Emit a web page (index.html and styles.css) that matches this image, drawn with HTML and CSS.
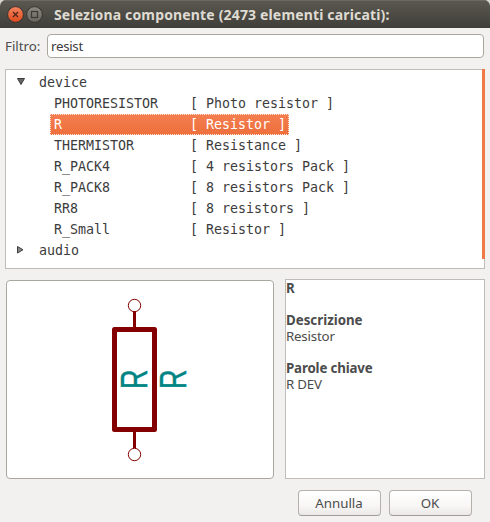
FILE: index.html
```html
<!DOCTYPE html>
<html lang="it">
<head>
<meta charset="utf-8">
<title>Seleziona componente</title>
<link rel="stylesheet" href="styles.css">
</head>
<body>
<div class="window">
  <header class="titlebar">
    <svg class="controls" width="36" height="18" viewBox="0 0 36 18">
      <defs>
        <linearGradient id="close" x1="0" y1="0" x2="0" y2="1"><stop offset="0" stop-color="#f58560"/><stop offset="1" stop-color="#dd4a1c"/></linearGradient>
        <linearGradient id="max" x1="0" y1="0" x2="0" y2="1"><stop offset="0" stop-color="#8b8980"/><stop offset="1" stop-color="#66645d"/></linearGradient>
      </defs>
      <circle cx="8.5" cy="9.5" r="7.9" fill="url(#close)" stroke="#34332e"/>
      <path d="M6 7l5 5m0-5l-5 5" stroke="#4d251a" stroke-width="1.3"/>
      <circle cx="27.5" cy="9.5" r="7.9" fill="url(#max)" stroke="#34332e"/>
      <rect x="24.5" y="6.5" width="6" height="6" fill="none" stroke="#3a3933" stroke-width="1.2"/>
    </svg>
    <h1>Seleziona componente (2473 elementi caricati):</h1>
  </header>
  <div class="filter">
    <label class="filter-label" for="filter">Filtro:</label>
    <input id="filter" class="filter-input" type="text" value="resist">
  </div>
  <div class="tree">
    <div class="group"><svg width="12" height="12"><path d="M2.5 2.5h7L6 8.5z" fill="#666" stroke="#3c3c3c"/></svg>device</div>
    <div class="item"><span class="name">PHOTORESISTOR</span><span>[ Photo resistor ]</span></div>
    <div class="item selected"><span class="name">R</span><span>[ Resistor ]</span></div>
    <div class="item"><span class="name">THERMISTOR</span><span>[ Resistance ]</span></div>
    <div class="item"><span class="name">R_PACK4</span><span>[ 4 resistors Pack ]</span></div>
    <div class="item"><span class="name">R_PACK8</span><span>[ 8 resistors Pack ]</span></div>
    <div class="item"><span class="name">RR8</span><span>[ 8 resistors ]</span></div>
    <div class="item"><span class="name">R_Small</span><span>[ Resistor ]</span></div>
    <div class="group"><svg width="12" height="12"><path d="M2.5 2.5v6.5L8 5.75z" fill="#888" stroke="#3c3c3c"/></svg>audio</div>
    <div class="scrollbar"></div>
  </div>
  <div class="panels">
    <div class="preview">
      <svg width="266" height="196" viewBox="7 281 266 196">
        <g fill="none" stroke="#840000">
          <path d="M134.5 311v18M134.5 430v18" stroke-width="3"/>
          <rect x="114.5" y="329.5" width="40" height="100" stroke-width="5" stroke-linejoin="round"/>
          <circle cx="134.5" cy="305.5" r="6.2"/>
          <circle cx="134.5" cy="454.5" r="6.2"/>
        </g>
        <g class="symbol-text">
          <text transform="translate(146.7 389) rotate(-90) scale(.72 1)">R</text>
          <text transform="translate(186.2 389) rotate(-90) scale(.72 1)">R</text>
        </g>
      </svg>
    </div>
    <div class="details">
      <b>R</b>
      <b class="heading">Descrizione</b>
      <span class="value">Resistor</span>
      <b class="heading keywords">Parole chiave</b>
      <span class="value">R DEV</span>
    </div>
  </div>
  <footer class="actions">
    <button>Annulla</button>
    <button>OK</button>
  </footer>
</div>
</body>
</html>
```
FILE: styles.css
```css
* { box-sizing: border-box; }
body {
  margin: 0;
  background: #d8d6d3;
  color: #4c4c4c;
  font: 13.3px/16px "Noto Sans", sans-serif;
}
.window {
  height: 522px;
  overflow: hidden;
  border-radius: 6px 6px 0 0;
  background: #f2f1f0;
}
.titlebar {
  display: flex;
  align-items: center;
  height: 28px;
  padding-left: 7px;
  background: linear-gradient(#5b5951, #3f3e39);
  box-shadow: inset 0 1px #6b6961;
}
.controls { flex: none; }
h1 {
  margin: 2px 0 0 11px;
  color: #dfdbd2;
  font-size: 14px;
  line-height: 20px;
  letter-spacing: .16px;
  white-space: nowrap;
}
.filter {
  display: flex;
  align-items: center;
  height: 41px;
  padding: 0 6px 5px 5px;
}
.filter-label { width: 42px; }
.filter-input {
  flex: 1;
  min-width: 0;
  height: 24px;
  padding: 0 3px;
  border: 1px solid #aaa79f;
  border-radius: 4px;
  background: #fff;
  color: #3c3c3c;
  font: inherit;
  letter-spacing: -.3px;
}
.tree {
  position: relative;
  height: 200px;
  margin: 0 5px;
  padding-top: 2px;
  border: 1px solid #c0bdb8;
  background: #fff;
  color: #3c3c3c;
  font: 13.3px/21px "DejaVu Sans Mono", monospace;
  letter-spacing: -.007px;
}
.group, .item { height: 21px; display: flex; white-space: pre; }
.group { padding-left: 9px; }
.group svg { margin: 4px 12px 0 0; }
.item { width: max-content; margin-left: 44px; padding: 0 3px 0 4px; }
.name { width: 136px; }
.selected {
  background: linear-gradient(#f47e50, #ed6f3c);
  outline: 1px dotted #fbe3d8;
  outline-offset: -1px;
  color: #fff;
}
.scrollbar {
  position: absolute;
  top: -1px;
  right: -1px;
  width: 3px;
  height: 190px;
  background: #f07746;
}
.panels {
  display: flex;
  gap: 11px;
  margin: 10px 5px 0 6px;
}
.preview {
  width: 268px;
  height: 199px;
  margin-top: 1px;
  border: 1px solid #aaa79f;
  border-radius: 4px;
  background: #fff;
}
.preview svg { display: block; }
.symbol-text {
  fill: #008484;
  stroke: #008484;
  stroke-width: .5px;
  font: 37.5px "Liberation Sans", sans-serif;
}
.details {
  display: flex;
  flex-direction: column;
  align-items: flex-start;
  width: 200px;
  height: 200px;
  border: 1px solid #c0bdb8;
  background: #fff;
}
.heading { margin-top: 16px; }
.keywords { letter-spacing: -.15px; }
.value { letter-spacing: -.2px; }
.actions {
  display: flex;
  justify-content: flex-end;
  gap: 8px;
  padding: 11px 18px 0 0;
}
.actions button {
  width: 83px;
  height: 26px;
  padding: 0 1px 0 0;
  border: 1px solid #b4b1ab;
  border-bottom-color: #9f9c96;
  border-radius: 4px;
  background: linear-gradient(#fff, #f8f7f6 60%, #ebe9e7);
  color: #4c4c4c;
  font: inherit;
}
```
